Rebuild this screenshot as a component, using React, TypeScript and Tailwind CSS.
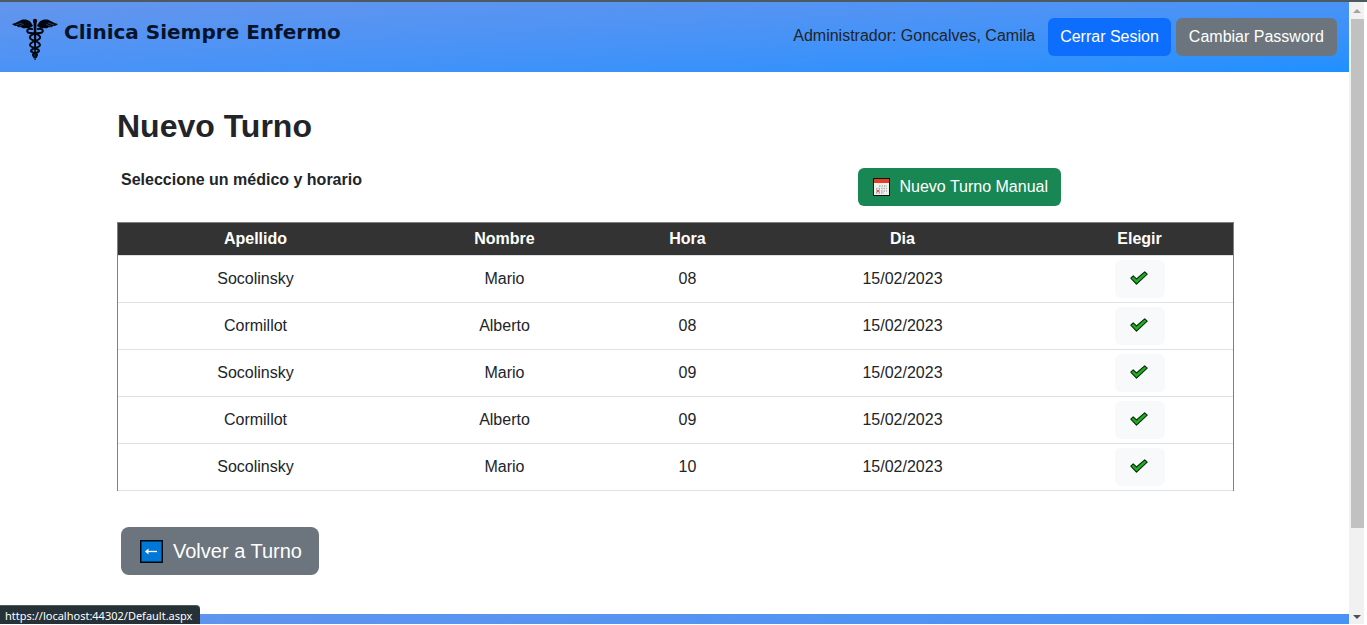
const turnos = [
  { apellido: "Socolinsky", nombre: "Mario", hora: "08", dia: "15/02/2023" },
  { apellido: "Cormillot", nombre: "Alberto", hora: "08", dia: "15/02/2023" },
  { apellido: "Socolinsky", nombre: "Mario", hora: "09", dia: "15/02/2023" },
  { apellido: "Cormillot", nombre: "Alberto", hora: "09", dia: "15/02/2023" },
  { apellido: "Socolinsky", nombre: "Mario", hora: "10", dia: "15/02/2023" },
];

const columnas = [
  { titulo: "Apellido", ancho: "w-[275px]" },
  { titulo: "Nombre", ancho: "w-[223px]" },
  { titulo: "Hora", ancho: "w-[143px]" },
  { titulo: "Dia", ancho: "w-[287px]" },
  { titulo: "Elegir", ancho: "w-[187px]" },
];

function Caduceus() {
  return (
    <svg viewBox="0 0 46 42" className="h-[42px] w-[46px]" aria-hidden="true">
      <g fill="#02060f">
        <path d="M21 8 C19 3 16 1 11 1.500 C8 2 5 5 0 6 C2 8 4 8 5 8 C6 9.500 8 9.500 9 9 C11 11 13 10 14 10 C17 11 19 9 21 8Z" />
        <path d="M25 8 C27 3 30 1 35 1.500 C38 2 41 5 46 6 C44 8 42 8 41 8 C40 9.500 38 9.500 37 9 C35 11 33 10 32 10 C29 11 27 9 25 8Z" />
        <circle cx="23" cy="3" r="2.200" />
        <path d="M21.500 4 H24.500 L23.700 42 H22.500Z" />
      </g>
      <g stroke="#5a91ec" strokeWidth="0.4" fill="none">
        <path d="M4 7 L10 5 M7 8.500 L12 6 M42 7 L36 5 M39 8.500 L34 6" />
      </g>
      <g stroke="#02060f" fill="none" strokeLinecap="round">
        <path strokeWidth="2" d="M20 11 C14 10 14 15 18 15 C23 15 29 17 28 20 C27 23 18 23 18 27 C18 30 27 30 27 33 C27 35 20 35 21 37 L22 39" />
        <path strokeWidth="2" d="M26 11 C32 10 32 15 28 15 C23 15 17 17 18 20 C19 23 28 23 28 27 C28 30 19 30 19 33 C19 35 26 35 25 37 L24 39" />
      </g>
    </svg>
  );
}

function Calendario() {
  return (
    <svg viewBox="0 0 17 18" className="h-[18px] w-[17px]" aria-hidden="true">
      <rect width="17" height="18" fill="#111" />
      <rect x="1" y="1" width="15" height="4" fill="#e23f24" />
      <rect x="1" y="5" width="15" height="12" fill="#f1f1f1" />
      <path d="M6 8H14M3 10.500H14M3 13H14M3 15H11" stroke="#b0b0b0" strokeWidth="1.400" strokeDasharray="1.500 1" />
      <path d="M3.500 11.500l3 3M6.500 11.500l-3 3" stroke="#e05b4a" />
    </svg>
  );
}

function Tilde() {
  return (
    <svg viewBox="0 0 18 14" className="h-[14px] w-[18px]" aria-hidden="true">
      <path
        d="M0.800 7.200L3.200 4.900L6.500 8L14.700 0.800L17.200 3.200L6.500 13.200Z"
        fill="#1fae26"
        stroke="#0a2c0b"
        strokeWidth="1.100"
        strokeLinejoin="round"
      />
    </svg>
  );
}

function FlechaIzquierda() {
  return (
    <svg viewBox="0 0 23 23" className="size-[23px]" aria-hidden="true">
      <rect width="23" height="23" fill="#05070a" />
      <rect x="1.500" y="1.500" width="20" height="20" fill="#0078d7" />
      <path d="M6 11.500H17" stroke="#fff" strokeWidth="1.300" />
      <path d="M5 11.500L8.500 8.500V14.500Z" fill="#fff" />
    </svg>
  );
}

function BarraDesplazamiento() {
  return (
    <div className="flex w-[15px] shrink-0 flex-col bg-[#f1f1f1]" aria-hidden="true">
      <div className="flex h-[17px] shrink-0 items-center justify-center">
        <svg viewBox="0 0 8 4" className="h-1 w-2"><path d="M4 0L8 4H0Z" fill="#a3a3a3" /></svg>
      </div>
      <div className="flex grow flex-col pl-0.5">
        <div className="grow-[509] bg-[#c1c1c1]" />
        <div className="grow-[81]" />
      </div>
      <div className="flex h-[15px] shrink-0 items-center justify-center">
        <svg viewBox="0 0 8 4" className="h-1 w-2"><path d="M0 0H8L4 4Z" fill="#505050" /></svg>
      </div>
    </div>
  );
}

export default function App() {
  return (
    <div className="relative flex h-screen flex-col bg-white pb-px font-['Liberation_Sans',Arial,sans-serif] text-base text-[#212529]">
      <div className="h-0.5 shrink-0 bg-[#4c5b5f]" />
      <div className="flex min-h-0 grow pr-[3px]">
        <div className="flex min-w-0 grow flex-col overflow-hidden">
          <header className="flex h-[70px] shrink-0 items-center justify-between bg-linear-to-br from-[#6495ed] to-[#1e90ff] px-3">
            <a href="#inicio" className="flex items-center gap-1.5 pt-1">
              <Caduceus />
              <span className="pb-3.5 font-['DejaVu_Sans',Verdana,sans-serif] text-xl font-bold text-[#06132b]">
                Clinica Siempre Enfermo
              </span>
            </a>
            <div className="flex items-center gap-[5px]">
              <span className="mr-2 pb-0.5">Administrador: Goncalves, Camila</span>
              <button type="button" className="h-[38px] rounded-md bg-[#0d6efd] px-3 text-white">
                Cerrar Sesion
              </button>
              <button type="button" className="h-[38px] rounded-md bg-[#6c757d] px-[13px] text-white">
                Cambiar Password
              </button>
            </div>
          </header>

          <main className="mx-auto w-full max-w-[1139px] shrink-0 px-3 pt-[34px] pb-[39px]">
            <h1 className="text-[32px] leading-10 font-bold">Nuevo Turno</h1>
            <div className="mt-[22px] flex items-start justify-between pr-[171px] pl-1">
              <h2 className="leading-6 font-bold">Seleccione un médico y horario</h2>
              <button type="button" className="flex h-[38px] items-center gap-[9px] rounded-md bg-[#198754] pr-[13px] pl-[15px] text-white">
                <Calendario />
                Nuevo Turno Manual
              </button>
            </div>

            <table className="mt-4 w-full table-fixed border-separate border-spacing-0 border-x border-t border-[#808080] text-center">
              <thead>
                <tr className="h-[33px] bg-[#333333] text-white">
                  {columnas.map((c) => (
                    <th key={c.titulo} scope="col" className={`${c.ancho} border-b border-[#dee2e6] p-0 font-bold`}>
                      {c.titulo}
                    </th>
                  ))}
                </tr>
              </thead>
              <tbody>
                {turnos.map((t) => (
                  <tr key={t.apellido + t.hora} className="h-[47px]">
                    <td className="border-b border-[#dee2e6] p-0">{t.apellido}</td>
                    <td className="border-b border-[#dee2e6] p-0">{t.nombre}</td>
                    <td className="border-b border-[#dee2e6] p-0">{t.hora}</td>
                    <td className="border-b border-[#dee2e6] p-0">{t.dia}</td>
                    <td className="border-b border-[#dee2e6] p-0">
                      <button
                        type="button"
                        aria-label={`Elegir ${t.apellido} ${t.hora}`}
                        className="mx-auto flex h-[38px] w-[50px] items-center justify-center rounded-md bg-[#f8f9fa] pr-0.5 pb-0.5"
                      >
                        <Tilde />
                      </button>
                    </td>
                  </tr>
                ))}
              </tbody>
            </table>

            <button type="button" className="mt-9 ml-1 flex h-12 items-center gap-2.5 rounded-lg bg-[#6c757d] pr-[17px] pl-[19px] text-xl text-white">
              <FlechaIzquierda />
              Volver a Turno
            </button>
          </main>

          <footer className="h-[70px] shrink-0 bg-linear-to-br from-[#6495ed] to-[#1e90ff]" />
        </div>
        <BarraDesplazamiento />
      </div>
      <div className="absolute bottom-px left-0 rounded-tr border-t border-[#4c5b5f] bg-[#263238] pt-0.5 pr-2 pl-[5px] font-['Noto_Sans','Segoe_UI',sans-serif] text-[11px] leading-4 text-white">
        https://localhost:44302/Default.aspx
      </div>
    </div>
  );
}
